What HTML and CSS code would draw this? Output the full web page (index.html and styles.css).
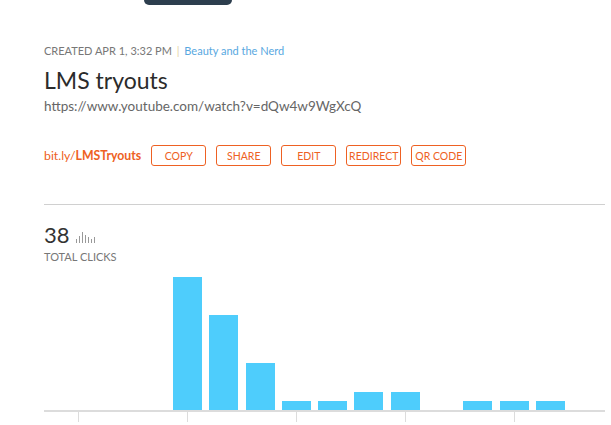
FILE: index.html
```html
<!DOCTYPE html>
<html lang="en">
<head>
    <meta charset="UTF-8">
    <title>LMS tryouts</title>
    <link rel="stylesheet" href="styles.css">
</head>
<body>
    <div class="page">
        <div class="top-tab"></div>

        <div class="meta">
            <span class="created">CREATED APR 1, 3:32 PM</span>
            <span class="sep">|</span>
            <a class="owner" href="#">Beauty and the Nerd</a>
        </div>
        <h1 class="title">LMS tryouts</h1>
        <div class="long-url">https://www.youtube.com/watch?v=dQw4w9WgXcQ</div>

        <div class="actions">
            <a class="short-link" href="#">bit.ly/<b>LMSTryouts</b></a>
            <button>COPY</button>
            <button>SHARE</button>
            <button>EDIT</button>
            <button>REDIRECT</button>
            <button>QR CODE</button>
        </div>

        <div class="divider"></div>

        <div class="clicks">
            <span class="count">38</span>
            <span class="mini-bars">
                <i style="height: 4px"></i><i style="height: 7px"></i><i style="height: 11px"></i><i style="height: 8px"></i><i style="height: 6px"></i><i style="height: 4px"></i><i style="height: 6px"></i>
            </span>
        </div>
        <div class="clicks-label">TOTAL CLICKS</div>

        <div class="chart">
            <div class="bars">
                <div class="bar" style="height: 133px"></div>
                <div class="bar" style="height: 95px"></div>
                <div class="bar" style="height: 47px"></div>
                <div class="bar" style="height: 9px"></div>
                <div class="bar" style="height: 9px"></div>
                <div class="bar" style="height: 18px"></div>
                <div class="bar" style="height: 18px"></div>
                <div class="bar" style="height: 0"></div>
                <div class="bar" style="height: 9px"></div>
                <div class="bar" style="height: 9px"></div>
                <div class="bar" style="height: 9px"></div>
            </div>
            <div class="ticks">
                <span></span><span></span><span></span><span></span><span></span>
            </div>
            <div class="axis-labels">
                <span>12:00 PM</span>
                <span>3:00 PM</span>
            </div>
        </div>
    </div>
</body>
</html>
```

FILE: styles.css
```css
body {
    margin: 0;
    background: #fff;
    font-family: Lato, "Open Sans", Arial, sans-serif;
    color: #333;
    overflow: hidden;
}

.page {
    padding: 0 6px 0 44px;
}

.top-tab {
    width: 88px;
    height: 5px;
    margin-left: 100px;
    background: #2d3e4e;
    border-radius: 0 0 6px 6px;
}

.meta {
    margin-top: 39px;
    font-size: 11px;
    line-height: 14px;
    color: #777;
}

.sep {
    color: #e3d3a3;
    margin: 0 2px;
}

.owner {
    color: #58a8df;
    text-decoration: none;
}

.title {
    margin: 9px 0 0;
    font-size: 23px;
    font-weight: normal;
    line-height: 26px;
    color: #2b2b2b;
}

.long-url {
    margin-top: 5px;
    font-size: 13.5px;
    line-height: 17px;
    color: #666;
}

.actions {
    display: flex;
    align-items: center;
    gap: 10px;
    margin-top: 30px;
}

.short-link {
    color: #ee6123;
    font-size: 12.3px;
    text-decoration: none;
}

.short-link b {
    font-weight: bold;
}

button {
    width: 55px;
    height: 21px;
    padding: 0;
    background: #fff;
    border: 1px solid #ee6123;
    border-radius: 3px;
    color: #ee6123;
    font-family: inherit;
    font-size: 10.5px;
}

.divider {
    height: 1px;
    margin-top: 38px;
    background: #d0d0d0;
}

.clicks {
    display: flex;
    align-items: flex-end;
    gap: 6px;
    margin-top: 20px;
}

.count {
    font-size: 22px;
    line-height: 20px;
    color: #333;
}

.mini-bars {
    display: flex;
    align-items: flex-end;
    gap: 1.5px;
    height: 12px;
    margin-bottom: 2px;
}

.mini-bars i {
    display: block;
    width: 1.5px;
    background: #999;
}

.clicks-label {
    margin-top: 5px;
    font-size: 11px;
    color: #777;
}

.chart {
    margin-top: 11px;
}

.bars {
    display: flex;
    align-items: flex-end;
    gap: 7.3px;
    height: 136px;
    padding-left: 129px;
    border-bottom: 2px solid #dcdcdc;
}

.bar {
    width: 29px;
    background: #4ecdfc;
}

.ticks {
    display: flex;
    gap: 107.9px;
    height: 10px;
    padding-left: 34px;
}

.ticks span {
    width: 1px;
    background: #dcdcdc;
}

.axis-labels {
    display: flex;
    gap: 266.7px;
    padding-left: 5px;
    margin-top: 3px;
    font-size: 11px;
    color: #888;
}

.axis-labels span {
    width: 60px;
    text-align: center;
}
```
